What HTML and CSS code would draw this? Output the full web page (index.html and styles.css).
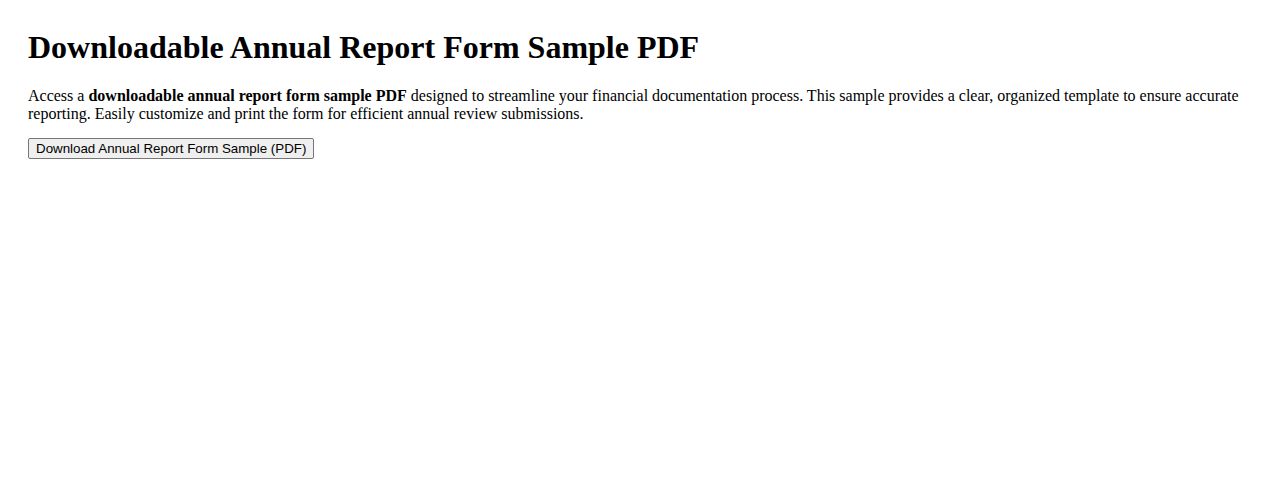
FILE: index.html
```html
<!DOCTYPE html>
<html>
<head>
  <title>Downloadable Annual Report Form Sample PDF</title>
  <meta name="viewport" content="width=device-width, initial-scale=1.0">
  <link rel="stylesheet" href="styles.css">
</head>
<body>
  <div class="page">
    <h1>Downloadable Annual Report Form Sample PDF</h1>
    <p>Access a <strong>downloadable annual report form sample PDF</strong> designed to streamline your financial documentation process. This sample provides a clear, organized template to ensure accurate reporting. Easily customize and print the form for efficient annual review submissions.</p>
    <button class="download-btn" type="button">Download Annual Report Form Sample (PDF)</button>
  </div>
</body>
</html>
```

FILE: styles.css
```css
body {
  font-family: "Liberation Serif", "Times New Roman", serif;
  font-size: 16px;
  color: #000000;
  background-color: #ffffff;
  margin: 8px;
}

.page {
  padding: 0 20px;
}

h1 {
  font-size: 32px;
  margin: 21px 0;
}

p {
  margin: 16px 0;
  line-height: 17.5px;
}

.download-btn {
  font-family: "Liberation Sans", Arial, sans-serif;
  font-size: 13.33px;
  color: #000000;
  background-color: #efefef;
  border: 1px solid #767676;
  border-radius: 2px;
  padding: 1px 7px;
  height: 21px;
}
```
